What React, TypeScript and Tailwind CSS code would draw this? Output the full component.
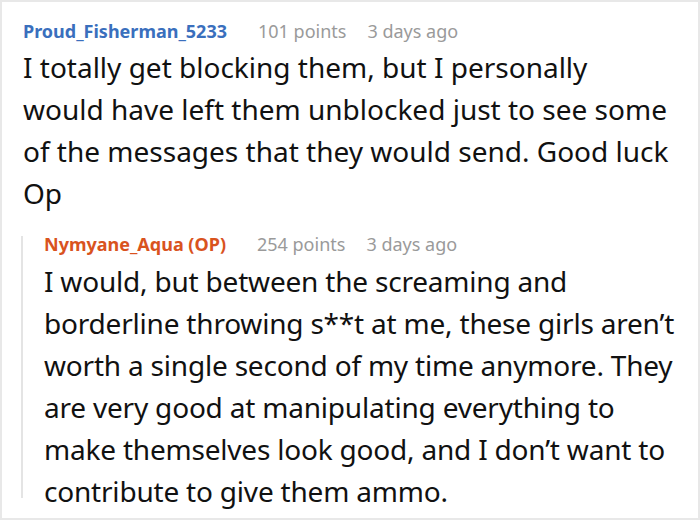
export default function App() {
  return (
    <div
      className="w-[700px] h-[520px] bg-white border-2 border-[#e8e8e8] overflow-hidden text-[#111]"
      style={{ fontFamily: '"Noto Sans", "Open Sans", sans-serif' }}
    >
      <div className="pl-[21px] pt-[17px]">
        <div className="flex items-center h-[24px] text-[18px]">
          <span className="font-bold text-[#3a6fbd]">Proud_Fisherman_5233</span>
          <span className="ml-[31px] text-[#9a9a9a]">101 points</span>
          <span className="ml-[21px] text-[#9a9a9a]">3 days ago</span>
        </div>
        <div className="mt-[3px] text-[28px] leading-[42px]">
          <div>I totally get blocking them, but I personally</div>
          <div>would have left them unblocked just to see some</div>
          <div>of the messages that they would send. Good luck</div>
          <div>Op</div>
        </div>
      </div>
      <div className="ml-[19px] mt-[18px] flex">
        <div className="w-[2px] bg-[#e4e4e4] mt-[4px] mb-[14px]" />
        <div className="pl-[21px] whitespace-nowrap">
          <div className="flex items-center h-[24px] text-[18px]">
            <span className="font-bold text-[#d9531e]">Nymyane_Aqua (OP)</span>
            <span className="ml-[31px] text-[#9a9a9a]">254 points</span>
            <span className="ml-[21px] text-[#9a9a9a]">3 days ago</span>
          </div>
          <div className="mt-[4px] text-[28px] leading-[42px] tracking-[-0.2px]">
            <div>I would, but between the screaming and</div>
            <div>borderline throwing s**t at me, these girls aren’t</div>
            <div>worth a single second of my time anymore. They</div>
            <div>are very good at manipulating everything to</div>
            <div>make themselves look good, and I don’t want to</div>
            <div>contribute to give them ammo.</div>
          </div>
        </div>
      </div>
    </div>
  );
}
